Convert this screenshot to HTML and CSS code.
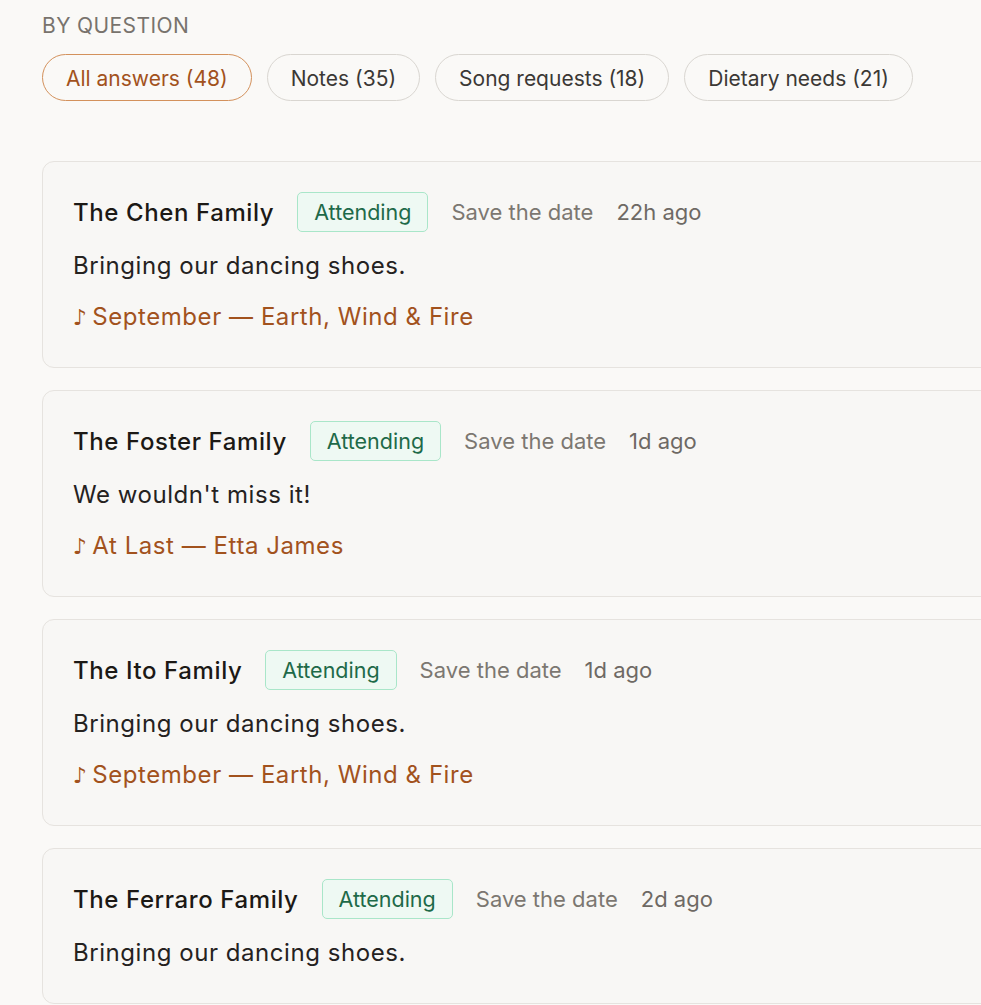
FILE: index.html
```html
<!DOCTYPE html>
<html lang="en">

<head>
    <meta charset="UTF-8">
    <meta name="viewport" content="width=device-width, initial-scale=1.0">
    <title>RSVP answers</title>
    <link rel="stylesheet" href="styles.css">
</head>

<body>
    <h2 class="section-label">By question</h2>
    <div class="chips">
        <button class="chip active">All answers (48)</button>
        <button class="chip">Notes (35)</button>
        <button class="chip">Song requests (18)</button>
        <button class="chip">Dietary needs (21)</button>
    </div>

    <div class="answers">
        <div class="card">
            <div class="card-head">
                <span class="guest">The Chen Family</span>
                <span class="badge">Attending</span>
                <span class="event">Save the date</span>
                <span class="time">22h ago</span>
            </div>
            <p class="note">Bringing our dancing shoes.</p>
            <p class="song"><span class="song-icon">&#9834;</span> September &mdash; Earth, Wind &amp; Fire</p>
        </div>

        <div class="card">
            <div class="card-head">
                <span class="guest">The Foster Family</span>
                <span class="badge">Attending</span>
                <span class="event">Save the date</span>
                <span class="time">1d ago</span>
            </div>
            <p class="note">We wouldn't miss it!</p>
            <p class="song"><span class="song-icon">&#9834;</span> At Last &mdash; Etta James</p>
        </div>

        <div class="card">
            <div class="card-head">
                <span class="guest">The Ito Family</span>
                <span class="badge">Attending</span>
                <span class="event">Save the date</span>
                <span class="time">1d ago</span>
            </div>
            <p class="note">Bringing our dancing shoes.</p>
            <p class="song"><span class="song-icon">&#9834;</span> September &mdash; Earth, Wind &amp; Fire</p>
        </div>

        <div class="card">
            <div class="card-head">
                <span class="guest">The Ferraro Family</span>
                <span class="badge">Attending</span>
                <span class="event">Save the date</span>
                <span class="time">2d ago</span>
            </div>
            <p class="note">Bringing our dancing shoes.</p>
        </div>
    </div>
</body>

</html>
```

FILE: styles.css
```css
body {
    font-family: Inter, "Noto Sans", sans-serif;
    background-color: #faf9f7;
    color: #211e1b;
    margin: 0;
    padding: 14px 0 0 42px;
    overflow: hidden;
}

.section-label {
    margin: 0;
    font-size: 21px;
    line-height: 24px;
    font-weight: 400;
    text-transform: uppercase;
    letter-spacing: 0.4px;
    color: #78736d;
}

.chips {
    display: flex;
    gap: 15px;
    margin-top: 16px;
}

.chip {
    font-family: inherit;
    font-size: 21px;
    height: 47px;
    padding: 2px 23px 0;
    border: 1px solid #d9d6d1;
    border-radius: 24px;
    background-color: transparent;
    color: #3b3835;
    cursor: pointer;
}

.chip.active {
    border-color: #d3915c;
    color: #a2521d;
}

.answers {
    display: flex;
    flex-direction: column;
    gap: 22px;
    margin-top: 60px;
    width: 1000px;
}

.card {
    background-color: #f8f7f5;
    border: 1px solid #e6e3df;
    border-radius: 12px;
    padding: 30px 30px 34px;
}

.card-head {
    display: flex;
    align-items: center;
    gap: 23px;
    height: 40px;
}

.guest {
    font-size: 24px;
    font-weight: 500;
    letter-spacing: 0.6px;
    color: #1c1915;
}

.badge {
    font-size: 21.5px;
    line-height: 38px;
    padding: 0 16px;
    border: 1px solid #a9e6c9;
    border-radius: 5px;
    background-color: #eef9f3;
    color: #1e6a49;
}

.event {
    font-size: 22px;
    color: #7c7771;
}

.time {
    font-size: 22px;
    color: #6e6964;
}

.note {
    margin: 18px 0 0;
    font-size: 24px;
    line-height: 32px;
    letter-spacing: 0.55px;
    color: #25221f;
}

.song {
    margin: 19px 0 0;
    height: 32px;
    font-size: 24px;
    line-height: 32px;
    letter-spacing: 0.55px;
    color: #a2521d;
}

.song-icon {
    font-family: "DejaVu Sans", sans-serif;
    font-size: 22px;
    line-height: 0;
    letter-spacing: 0;
    margin-right: -2px;
}
```
